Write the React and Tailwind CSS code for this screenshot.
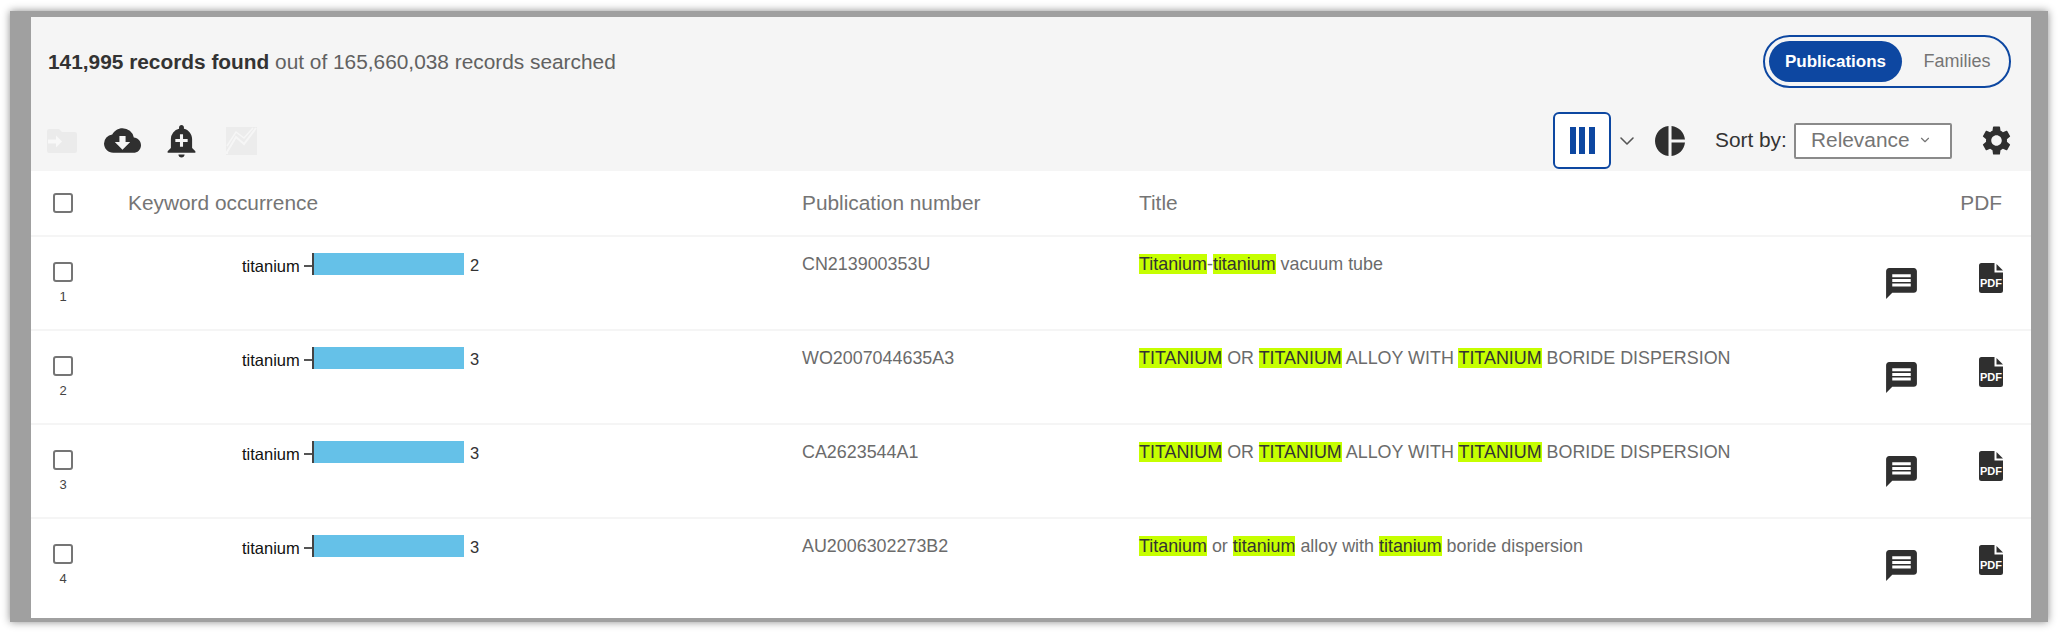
import { ChevronDown } from 'lucide-react';
import {
    MdAddAlert,
    MdCloudDownload,
    MdMessage,
    MdPieChart,
    MdSettings,
} from 'react-icons/md';

const rows = [
    { id: 1, count: 2, number: 'CN213900353U', title: [['Titanium', true], ['-', false], ['titanium', true], [' vacuum tube', false]] },
    { id: 2, count: 3, number: 'WO2007044635A3', title: [['TITANIUM', true], [' OR ', false], ['TITANIUM', true], [' ALLOY WITH ', false], ['TITANIUM', true], [' BORIDE DISPERSION', false]] },
    { id: 3, count: 3, number: 'CA2623544A1', title: [['TITANIUM', true], [' OR ', false], ['TITANIUM', true], [' ALLOY WITH ', false], ['TITANIUM', true], [' BORIDE DISPERSION', false]] },
    { id: 4, count: 3, number: 'AU2006302273B2', title: [['Titanium', true], [' or ', false], ['titanium', true], [' alloy with ', false], ['titanium', true], [' boride dispersion', false]] },
];

const Checkbox = () => (
    <div className="w-5 h-5 rounded-[3px] border-2 border-[#757575] bg-white shrink-0" />
);

const PdfIcon = () => (
    <svg width="24" height="30" viewBox="0 0 24 30" className="shrink-0">
        <path d="M2.5 0H15.5V9.5H24V27.5A2.5 2.5 0 0 1 21.5 30H2.5A2.5 2.5 0 0 1 0 27.5V2.5A2.5 2.5 0 0 1 2.5 0Z" fill="#2f2f2f" />
        <path d="M17.5 1L24 7.5H17.5Z" fill="#2f2f2f" />
        <text x="12" y="23.5" textAnchor="middle" fontSize="11" fontWeight="700" fill="#ffffff" fontFamily="Liberation Sans, sans-serif">PDF</text>
    </svg>
);

const FolderIcon = () => (
    <svg width="30" height="24" viewBox="0 0 30 24" className="shrink-0">
        <path d="M2 0H12L15 3H28A2 2 0 0 1 30 5V22A2 2 0 0 1 28 24H2A2 2 0 0 1 0 22V2A2 2 0 0 1 2 0Z" fill="#ebebeb" />
        <path d="M1 10.5H9V6.5L15 12.5L9 18.5V14.5H1Z" fill="#f8f8f8" />
    </svg>
);

const TrendIcon = () => (
    <svg width="31" height="28" viewBox="0 0 31 28" className="shrink-0">
        <rect width="31" height="28" fill="#ececec" />
        <path d="M1 27V25L10 10L18 17L30 1" fill="none" stroke="#f6f6f6" strokeWidth="2" />
        <path d="M1 19L10 5L18 11L27 1" fill="none" stroke="#f6f6f6" strokeWidth="1.5" />
    </svg>
);

const App = () => {
    return (
        <div className="w-[2062px] h-[635px] bg-white pt-[11px] pl-[10px] font-['Liberation_Sans',sans-serif]">
            {/* Grey frame round the capture */}
            <div className="w-[2038px] h-[611px] border-t-[6px] border-l-[21px] border-r-[17px] border-b-[4px] border-[#a0a0a0] shadow-[0_0_8px_rgba(0,0,0,0.45)] bg-white">
                {/* Toolbar */}
                <div className="h-[154px] bg-[#f5f5f5] pt-[18px]">
                    <div className="flex items-center justify-between pl-[17px] pr-[20px]">
                        <p className="text-[20.85px] text-[#616161]">
                            <span className="font-bold text-[#333333]">141,995 records found</span> out of 165,660,038 records searched
                        </p>
                        <div className="w-[248px] h-[53px] rounded-full border-2 border-[#0d47a1] p-1 flex items-center">
                            <div className="w-[133px] h-[41px] rounded-full bg-[#0d47a1] text-white font-bold text-[17px] flex items-center justify-center">Publications</div>
                            <div className="flex-1 pl-[7px] text-center text-[18px] text-[#757575]">Families</div>
                        </div>
                    </div>
                    <div className="flex items-center justify-between mt-6 pl-[16px]">
                        <div className="flex items-center">
                            <FolderIcon />
                            <MdCloudDownload size={37} className="ml-[27px] text-[#2f2f2f]" />
                            <MdAddAlert size={37} className="ml-[22px] text-[#2f2f2f]" />
                            <div className="ml-[26px]"><TrendIcon /></div>
                        </div>
                        <div className="flex items-center">
                            <div className="w-[58px] h-[57px] bg-white border-2 border-[#0d47a1] rounded-md flex items-center justify-center">
                                <div className="w-[25px] h-[27px] flex justify-between">
                                    <span className="w-[6px] bg-[#0d47a1]" />
                                    <span className="w-[6px] bg-[#0d47a1]" />
                                    <span className="w-[6px] bg-[#0d47a1]" />
                                </div>
                            </div>
                            <ChevronDown size={24} strokeWidth={1.6} className="ml-[4px] text-[#555555]" />
                            <MdPieChart size={36} className="ml-[13px] text-[#2f2f2f]" />
                            <span className="ml-[27px] w-[71px] pb-[2px] text-[20.85px] text-[#333333] whitespace-nowrap">Sort by:</span>
                            <div className="ml-2 w-[158px] h-9 pb-[2px] bg-white border-2 border-[#8a8a8a] rounded-[2px] flex items-center pl-[15px] text-[20.85px] text-[#757575]">
                                Relevance
                                <ChevronDown size={14} strokeWidth={2} className="ml-2" />
                            </div>
                            <MdSettings size={35} className="ml-[27px] mr-[17px] text-[#2f2f2f]" />
                        </div>
                    </div>
                </div>

                {/* Table head */}
                <div className="h-[66px] grid grid-cols-[64px_707px_337px_1fr] items-center border-b-2 border-[#f5f5f5] text-[20.85px] text-[#757575]">
                    <div className="flex justify-center"><Checkbox /></div>
                    <div className="pl-[33px]">Keyword occurrence</div>
                    <div>Publication number</div>
                    <div className="flex justify-between pr-[29px]">
                        <span>Title</span>
                        <span>PDF</span>
                    </div>
                </div>

                {/* Table rows */}
                {rows.map((row) => (
                    <div key={row.id} className="h-[94px] grid grid-cols-[64px_707px_337px_1fr] border-b-2 border-[#f5f5f5] last:border-b-0 last:h-[100px]">
                        <div className="flex flex-col items-center pt-[25px]">
                            <Checkbox />
                            <span className="mt-[7px] text-[13px] leading-4 text-[#444444]">{row.id}</span>
                        </div>
                        <div className="flex items-start pl-[147px] pt-4">
                            <span className="w-[62px] text-[16.5px] leading-[26px] text-[#111111]">titanium</span>
                            <span className="w-[8px] h-[1.5px] mt-[12px] bg-[#555555]" />
                            <span className="w-[152px] h-[22px] bg-[#65c1e8] border-l-2 border-[#444444]" />
                            <span className="ml-[6px] text-[16.5px] leading-[24px] text-[#333333]">{row.count}</span>
                        </div>
                        <div className="pt-[17px] text-[17.9px] leading-[21px] text-[#6b6b6b]">{row.number}</div>
                        <div className="flex items-start">
                            <div className="flex-1 pt-[17px] text-[17.9px] leading-[21px] text-[#6b6b6b] whitespace-pre">
                                {row.title.map(([text, hit], i) => (
                                    hit ? <span key={i} className="bg-[#c6ff00] text-[#333333]">{text}</span> : <span key={i}>{text}</span>
                                ))}
                            </div>
                            <MdMessage size={37} className="mt-7 text-[#2f2f2f]" />
                            <div className="mt-[26px] ml-[59px] mr-7"><PdfIcon /></div>
                        </div>
                    </div>
                ))}
            </div>
        </div>
    );
};

export default App;
